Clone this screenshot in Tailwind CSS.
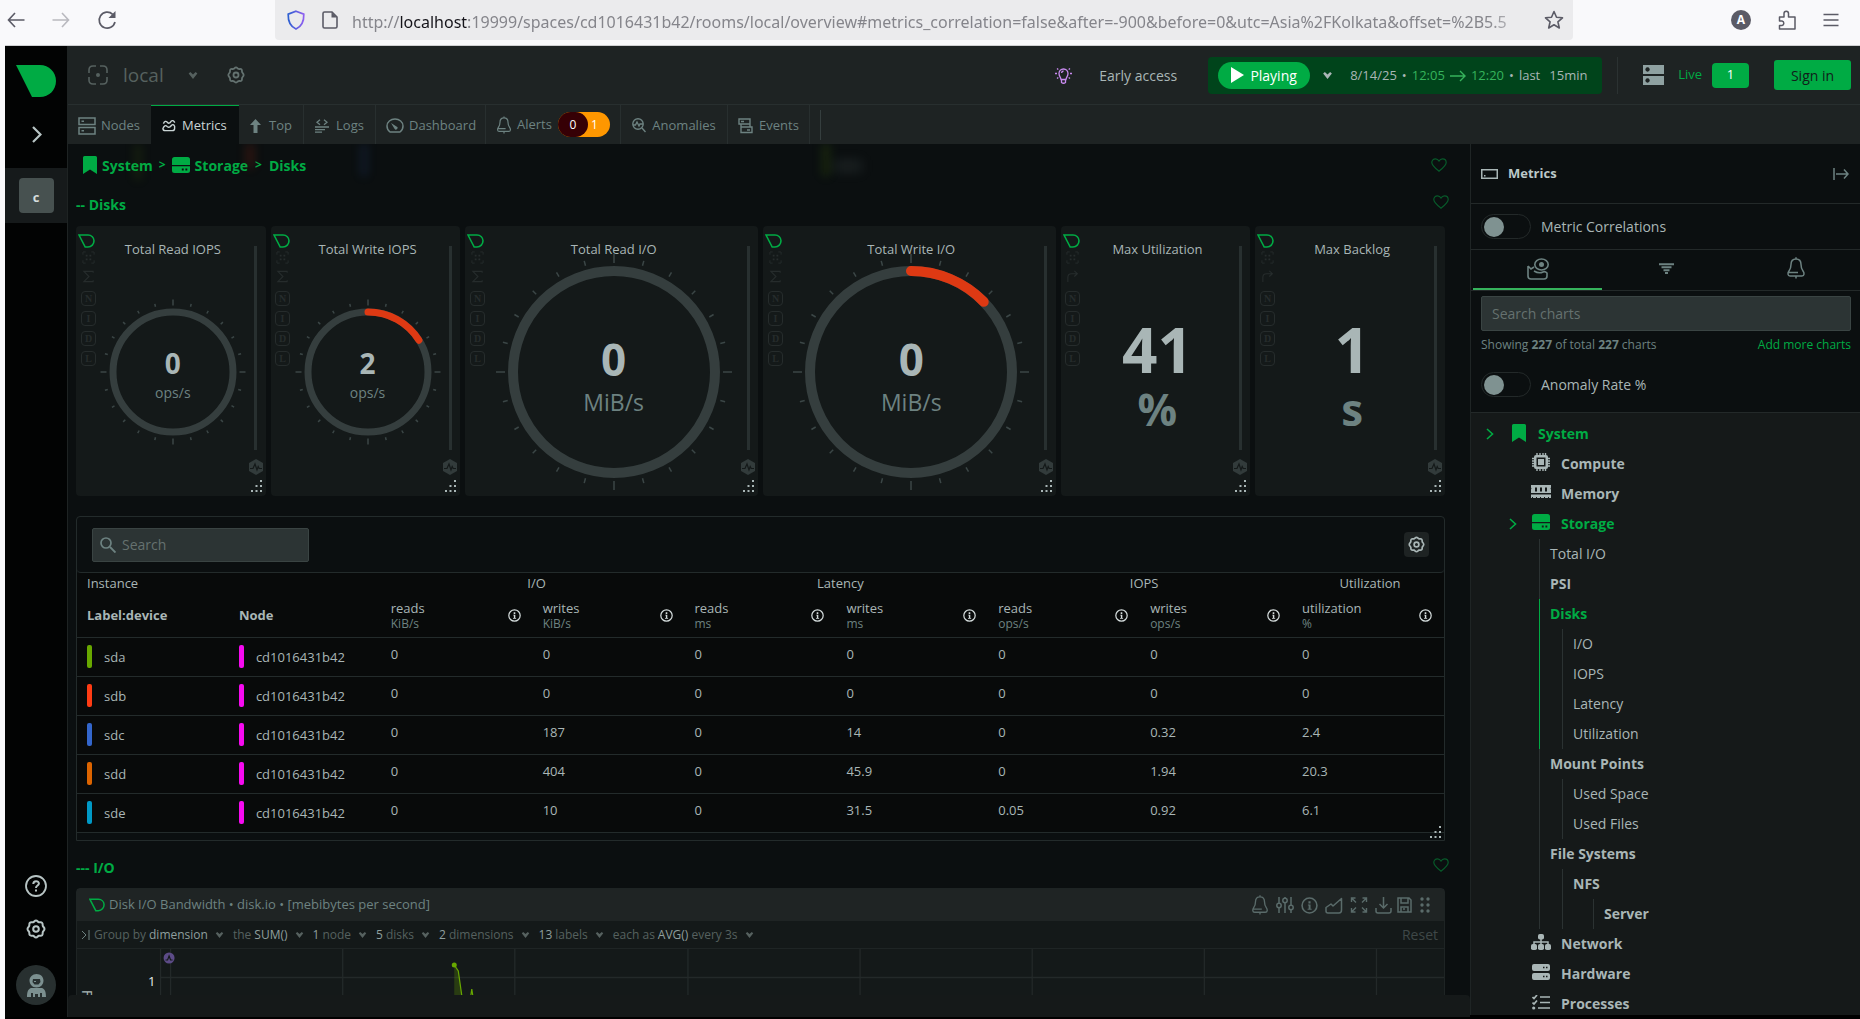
<!DOCTYPE html>
<html lang="en">
<head>
<meta charset="utf-8">
<title>Disks - Netdata</title>
<script src="https://cdn.jsdelivr.net/npm/@tailwindcss/browser@4"></script>
</head>
<body class="h-screen overflow-hidden flex flex-col bg-[#f9f9fb] font-['Open_Sans','Noto_Sans',sans-serif] text-[14px] text-[#a9b6b6]">

<svg class="hidden" aria-hidden="true">
  <symbol id="gear" viewBox="0 0 20 20"><path d="M10 1.6c1.5 0 1.8 1.4 2.9 1.7s2.300-.5 3.200.5.300 2 .7 3.100 1.700 1.500 1.700 3.100-1.300 1.900-1.700 3.100.3 2.100-.7 3.100-2.100.2-3.200.5-1.400 1.700-2.900 1.700-1.800-1.400-2.900-1.700-2.300.5-3.200-.5-.3-2-.7-3.100-1.700-1.500-1.700-3.100 1.300-1.900 1.700-3.100-.3-2.100.7-3.100 2.100-.2 3.200-.5S8.500 1.600 10 1.600z" fill="none" stroke="currentColor" stroke-width="2"/><circle cx="10" cy="10" r="2.800" fill="none" stroke="currentColor" stroke-width="2"/></symbol>
  <symbol id="caret" viewBox="0 0 10 8"><path d="M0 1.600 2 0l3 2.800L8 0l2 1.600L5 8z" fill="currentColor"/></symbol>
  <symbol id="bookmark" viewBox="0 0 14 18"><path d="M1.500 0h11Q14 0 14 1.500V18l-7-4.500L0 18V1.500Q0 0 1.500 0z" fill="currentColor"/></symbol>
  <symbol id="storage" viewBox="0 0 18 16"><path d="M2.500 0h13Q18 0 18 2.500V8H0V2.500Q0 0 2.500 0z" fill="currentColor"/><path fill-rule="evenodd" d="M0 9.200h18v4.300q0 2.500-2.500 2.500h-13Q0 16 0 13.500zM9.800 11.600v1.900h1.900v-1.900zm3.600 0v1.900h1.900v-1.900z" fill="currentColor"/></symbol>
  <symbol id="heart" viewBox="0 0 16 14"><path d="M8 13.200C4.500 10.500.8 7.800.8 4.600.8 2.400 2.400.8 4.500.8 6 .8 7.200 1.600 8 3 8.800 1.600 10 .8 11.500.8c2.100 0 3.700 1.600 3.700 3.800 0 3.200-3.700 5.900-7.200 8.600z" fill="none" stroke="currentColor" stroke-width="1.200"/></symbol>
  <symbol id="drop" viewBox="0 0 17 14"><path d="M1 1h9c3.500 0 6 2.600 6 5.800S13.500 13 10 13H7.200z" fill="none" stroke="#00ab44" stroke-width="1.600"/></symbol>
  <symbol id="focus" viewBox="0 0 14 14"><path d="M1 4V1h3M10 1h3v3M13 10v3h-3M4 13H1v-3" fill="none" stroke="currentColor"/><path d="M4 4h2v2H4zM8 4h2v2H8zM4 8h2v2H4zM8 8h2v2H8z" fill="currentColor"/></symbol>
  <symbol id="sigma" viewBox="0 0 14 14"><path d="M12 3V1.500H2L7.500 7 2 12.500h10V11" fill="none" stroke="currentColor" stroke-width="1.200"/></symbol>
  <symbol id="turn" viewBox="0 0 14 14"><path d="M2 13V8q0-4 4-4h6M9 1l3.200 3L9 7" fill="none" stroke="currentColor" stroke-width="1.200"/></symbol>
  <symbol id="hex" viewBox="0 0 14 16"><path d="M7 0l7 4v8l-7 4-7-4V4z" fill="#323b3b"/><path d="M1 9.500H4L6 5l2 6 1.200-3.500 1 2H13" fill="none" stroke="#141919" stroke-width="1.200"/></symbol>
  <symbol id="grip" viewBox="0 0 12 12"><path d="M10 0h2v2h-2zM5.500 5h2v2h-2zM10 5h2v2h-2zM1 10h2v2H1zM5.500 10h2v2h-2zM10 10h2v2h-2z" fill="#a9b6b6"/></symbol>
  <symbol id="info" viewBox="0 0 16 16"><circle cx="8" cy="8" r="7" fill="none" stroke="currentColor" stroke-width="1.500"/><path d="M7 4h2v2H7zM6.500 7H9v4h1v1H6.200v-1H7.200V8h-.7z" fill="currentColor"/></symbol>
  <symbol id="bell" viewBox="0 0 20 22"><path d="M10 2C6.500 2 5 4.500 5 7.500c0 3-.5 4.500-2 6.500-1.500 2-1.500 5 1 5h12c2.500 0 2.500-3 1-5-1.500-2-2-3.500-2-6.500C15 4.500 13.500 2 10 2zM10 2V.3M10 19v2.500M2.500 15.500H12" fill="none" stroke="currentColor" stroke-width="1.500"/></symbol>
  <symbol id="server" viewBox="0 0 18 18"><path d="M1 1h16v6.500H1zM1 10.500h16V17H1z" fill="none" stroke="currentColor" stroke-width="1.500"/><path d="M3.500 3.500H6v1.500H3.500zM3.500 13H6v1.500H3.500z" fill="currentColor"/></symbol>
  <symbol id="chev" viewBox="0 0 8 12"><path d="M1 1l5.500 5L1 11" fill="none" stroke="currentColor" stroke-width="1.600"/></symbol>
</svg>

<!-- Browser toolbar -->
<div class="h-[45px] shrink-0 flex items-start text-[#5b5b66]">
  <div class="w-[275px] h-10 shrink-0 flex items-center pl-[7px] gap-[27px]">
    <button aria-label="Back"><svg class="w-[18px] h-4" viewBox="0 0 18 16"><path d="M17.500 8H1.500M8 1L1.500 8 8 15" fill="none" stroke="currentColor" stroke-width="1.600"/></svg></button>
    <button aria-label="Forward" class="text-[#b9b9bf]"><svg class="w-[18px] h-4" viewBox="0 0 18 16"><path d="M.5 8h16M10 1l6.500 7L10 15" fill="none" stroke="currentColor" stroke-width="1.600"/></svg></button>
    <button aria-label="Reload"><svg class="w-5 h-5" viewBox="0 0 20 20"><path d="M18 12a8 8 0 1 1-2.300-7.700" fill="none" stroke="currentColor" stroke-width="1.700"/><path d="M18.500 1v7h-7z" fill="currentColor"/></svg></button>
  </div>
  <div class="w-[1298px] h-10 min-w-0 flex items-center bg-[#ebebed] rounded-b-[4px] pl-[11px] pr-[9px]">
    <svg class="w-5 h-5 shrink-0" viewBox="0 0 20 20"><defs><linearGradient id="sh"><stop offset="0" stop-color="#2b5fd0"/><stop offset="1" stop-color="#8f5ff0"/></linearGradient></defs><path d="M10 1.200l7.800 3C18 11 15.500 16.500 10 19 4.500 16.500 2 11 2.200 4.200z" fill="none" stroke="url(#sh)" stroke-width="1.700"/></svg>
    <svg class="w-4 h-[18px] shrink-0 ml-4 mr-[14px]" viewBox="0 0 16 18"><path d="M2.500 1h7.500l5 5v9.500q0 1.500-1.500 1.500h-11Q1 17 1 15.500v-13Q1 1 2.500 1z" fill="none" stroke="currentColor" stroke-width="1.600"/><path d="M9.500 1v5.500H15z" fill="currentColor"/></svg>
    <div role="textbox" aria-label="Address" class="flex-1 min-w-0 overflow-hidden whitespace-nowrap font-['Noto_Sans','Open_Sans',sans-serif] text-[16px] text-[#85858b] pt-1 [mask-image:linear-gradient(to_right,black_96%,transparent)]">http://<span class="text-[#15141a]">localhost</span>:19999/spaces/cd1016431b42/rooms/local/overview#metrics_correlation=false&amp;after=-900&amp;before=0&amp;utc=Asia%2FKolkata&amp;offset=%2B5.5</div>
    <button aria-label="Bookmark" class="ml-[9px]"><svg class="w-5 h-5" viewBox="0 0 20 20"><path d="M10 1.500l2.500 5.700 6 .6-4.600 4 1.400 6.200-5.300-3.300L4.700 18l1.400-6.200-4.600-4 6-.6z" fill="none" stroke="currentColor" stroke-width="1.600" stroke-linejoin="round"/></svg></button>
  </div>
  <div class="ml-auto h-10 flex items-center gap-[27px] pr-[21px]">
    <span class="size-5 rounded-full bg-[#5b5b66] text-white text-[12px] font-bold grid place-items-center leading-none">A</span>
    <svg class="w-[18px] h-5" viewBox="0 0 18 20"><path d="M1.500 7H6V3.500a2 2 0 0 1 4.500 0V7H17v12H1.500v-3.500H4a2.300 2.300 0 0 0 0-4.500H1.500z" fill="none" stroke="currentColor" stroke-width="1.500" stroke-linejoin="round"/></svg>
    <svg class="w-4 h-[14px]" viewBox="0 0 16 14"><path d="M.5 1.500h15M.5 7h15M.5 12.500h15" stroke="currentColor" stroke-width="1.400"/></svg>
  </div>
</div>

<div class="flex-1 min-h-0 flex ml-[5px] bg-black border-t border-[#cfd0d2] pb-[2px]">
  <!-- Space rail -->
  <nav class="w-[63px] shrink-0 bg-[#020303] border-r border-[#1e2323] flex flex-col items-center">
    <a href="#" aria-label="Netdata" class="mt-[19px]"><svg class="w-10 h-8" viewBox="0 0 40 32"><path d="M0 0h24c9 0 16 7 16 16s-7 16-16 16h-8z" fill="#00ab44"/></svg></a>
    <button aria-label="Expand" class="mt-[29px] text-[#b7c4c4]"><svg class="w-3 h-[17px] block" viewBox="0 0 12 17"><path d="M3 1l7.500 7.500L3 16" fill="none" stroke="currentColor" stroke-width="2.200"/></svg></button>
    <div class="mt-[25px] w-full h-[55px] bg-[#161a1b] flex items-center justify-center"><button class="size-[35px] rounded bg-[#475150] text-[#d6dddd] text-[13px] font-bold pt-1">c</button></div>
    <div class="mt-auto flex flex-col items-center pb-[12px] text-[#b7c4c4]">
      <button aria-label="Help" class="mb-[22px]"><svg class="size-[22px] block" viewBox="0 0 22 22"><circle cx="11" cy="11" r="10" fill="none" stroke="currentColor" stroke-width="1.800"/><path d="M8.300 9c0-3.800 5.600-3.600 5.600-.4 0 2-2.900 2-2.900 4.400" fill="none" stroke="currentColor" stroke-width="2"/><path d="M10 14.500h2v2h-2z" fill="currentColor"/></svg></button>
      <button aria-label="Settings" class="mb-[26px]"><svg class="size-5 block"><use href="#gear"/></svg></button>
      <button aria-label="Account" class="size-10 rounded-full bg-[#283030] grid place-items-center text-[#7c9090]"><svg class="w-[19px] h-[23px]" viewBox="0 0 19 23"><path fill="currentColor" fill-rule="evenodd" d="M9.500 0c4 0 7 2.800 7 6.500S14 13.500 9.500 13.500 2.500 10 2.500 6.500 5.500 0 9.500 0zM6 5l-.5 3 2 2.500h4l2-2.500-.5-3z"/><path d="M0 23c0-5 1-8 4-9h11c3 1 4 4 4 9h-4v-4h-2v4H11v-3H8v3H6v-4H4v4z" fill="currentColor"/><path d="M7 7.500h2" stroke="currentColor"/></svg></button>
    </div>
  </nav>

  <div class="flex-1 min-w-0 flex flex-col">
    <!-- Top bar -->
    <header class="h-[58px] shrink-0 bg-[#1e2323] flex items-center pl-5 pr-[9px] text-[#56615f]">
      <svg class="size-5" viewBox="0 0 20 20"><path d="M1 8V5q0-4 4-4h3M12 1h3q4 0 4 4v3M19 12v3q0 4-4 4h-3M8 19H5q-4 0-4-4v-3" fill="none" stroke="currentColor" stroke-width="1.600"/><circle cx="10" cy="10" r="2" fill="currentColor"/></svg>
      <button class="ml-[15px] flex items-center gap-6 text-[19px]">local <svg class="w-[10px] h-[7px]"><use href="#caret"/></svg></button>
      <button aria-label="Room settings" class="ml-[29px] text-[#647270]"><svg class="size-[18px]"><use href="#gear"/></svg></button>
      <div class="ml-auto flex items-center">
        <svg class="w-[17px] h-[17px] mr-[27px] text-[#c98bf0]" viewBox="0 0 17 17"><path d="M6 12.500C6 10.500 4 9.500 4 6.500a4.500 4.500 0 0 1 9 0c0 3-2 4-2 6zM6.500 12.500v3q2 1.500 4 0v-3M0 6.500h2M15 6.500h2M2 1.500l1.300 1M15 1.500l-1.300 1M2 11.500l1.300-1M15 11.500l-1.300-1M6.500 6q.3-1.800 2-2" fill="none" stroke="currentColor" stroke-width="1.300"/></svg>
        <a href="#" class="text-[#a9b6b6] mr-[31px]">Early access</a>
        <div class="h-[37px] w-[394px] rounded bg-[#00441b] flex items-center pl-[10px] text-[#a9b6b6]">
          <button class="h-[27px] w-[92px] rounded-full bg-[#00ab44] text-white flex items-center justify-center gap-[6px]"><svg class="w-[13px] h-[16px]" viewBox="0 0 13 16"><path d="M0 0l13 8L0 16z" fill="#fff"/></svg>Playing</button>
          <svg class="w-[9px] h-[7px] ml-[13px] mr-[18px]"><use href="#caret"/></svg>
          <span class="text-[13px] pt-px flex items-center gap-[5px] whitespace-nowrap"><span>8/14/25</span><span>•</span><span class="text-[#36b35c]">12:05</span><svg class="w-4 h-3 text-[#36b35c]" viewBox="0 0 16 12"><path d="M0 6h15M10 1l5 5-5 5" fill="none" stroke="currentColor" stroke-width="1.400"/></svg><span class="text-[#36b35c]">12:20</span><span>•</span><span>last</span><span class="ml-1">15min</span></span>
        </div>
        <div class="w-px h-[37px] bg-[#2b3232] ml-[15px] mr-[25px]"></div>
        <svg class="w-[21px] h-5 text-[#8fa1a1]" viewBox="0 0 21 20"><path fill-rule="evenodd" d="M0 0h21v9H0zM4.500 2.300a2.200 2.200 0 1 0 .1 0zM0 11h21v9H0zm4.500 2.300a2.200 2.200 0 1 0 .1 0z" fill="currentColor"/></svg>
        <span class="ml-[14px] mr-[10px] text-[#00ab44] text-[13px]">Live</span>
        <button class="w-[37px] h-[25px] rounded bg-[#00ab44] text-white text-[13px]">1</button>
        <button class="ml-[25px] w-[77px] h-[30px] rounded-[3px] bg-[#00ab44] text-[#11201a]">Sign in</button>
      </div>
    </header>

    <!-- Section tabs -->
    <nav class="h-10 shrink-0 bg-[#1e2323] border-t border-[#282f2f] flex items-stretch text-[#6d8281] text-[13px]">
      <a href="#" class="w-[83px] pt-[2px] flex items-center pl-[10px] gap-[5px]"><svg class="size-[18px]"><use href="#server"/></svg>Nodes</a>
      <a href="#" class="w-[88px] pt-px flex items-center pl-[11px] gap-[6px] bg-[#0b0f10] border-t border-t-[#00ab44] text-[#cad5d5]"><svg class="w-[14px] h-[13px]" viewBox="0 0 15 13"><path d="M1.500 4.500q2-4 4.200-1.500 2 2.500 4-1 2-2 4 1.500" fill="none" stroke="currentColor" stroke-width="1.500"/><path d="M13.500 7v3q0 2-2.500 2H3.500Q1 12 1 9.700 3 5 5.500 7.500q2.500 2 4.500-1 2-2 3.500.5" fill="none" stroke="currentColor" stroke-width="1.500"/></svg>Metrics</a>
      <a href="#" class="w-[65px] pt-[2px] flex items-center justify-center gap-2 border-r border-[#282f2f]"><svg class="w-[11px] h-[14px]" viewBox="0 0 11 14"><path d="M5.500 0L11 6H7.500v8h-4V6H0z" fill="currentColor"/></svg>Top</a>
      <a href="#" class="w-[72px] pt-[2px] flex items-center justify-center gap-[7px] border-r border-[#282f2f]"><svg class="w-[14px] h-[14px]" viewBox="0 0 14 14"><path d="M5 .8L2 3.300 5 5.800M9 .8l3 2.500-3 2.500M0 8h14M0 10.600h10M0 13.200h7" fill="none" stroke="currentColor" stroke-width="1.300"/></svg>Logs</a>
      <a href="#" class="w-[110px] pt-[2px] flex items-center pl-[10px] gap-[5px] border-r border-[#282f2f]"><svg class="w-[18px] h-[15px]" viewBox="0 0 18 15"><path d="M4 14Q1 12 1 8a8 7 0 0 1 16 0q0 4-3 6z" fill="none" stroke="currentColor" stroke-width="1.500"/><path d="M5 5l5.500 3.500a1.600 1.600 0 1 1-2 2.300z" fill="currentColor"/></svg>Dashboard</a>
      <a href="#" class="w-[135px] flex items-center pl-[10px] gap-[5px] border-r border-[#282f2f]"><svg class="w-4 h-[18px]"><use href="#bell"/></svg>Alerts<span class="ml-px w-[52px] h-[25px] rounded-full bg-[#ff9700] flex items-center text-white text-[12px]"><span class="w-[30px] h-full rounded-full bg-[#360005] grid place-items-center">0</span><span class="pl-[3px]">1</span></span></a>
      <a href="#" class="w-[107px] pt-[2px] flex items-center justify-center gap-[6px] border-r border-[#282f2f]"><svg class="w-[14px] h-[15px]" viewBox="0 0 14 15"><circle cx="6" cy="6" r="5.200" fill="none" stroke="currentColor" stroke-width="1.400"/><path d="M1 7h2.500L5 4l2 4 1-2h3M10 10l3.500 4" fill="none" stroke="currentColor" stroke-width="1.400"/></svg>Anomalies</a>
      <a href="#" class="w-[82px] pt-[2px] flex items-center justify-center gap-[6px] border-r border-[#282f2f]"><svg class="w-[15px] h-4" viewBox="0 0 15 16"><path d="M1 1h11v5H1zM3 9h11v5.500H3zM3 6v3M12 6v3M3 3.500h3M9 12h3" fill="none" stroke="currentColor" stroke-width="1.400"/></svg>Events</a>
      <div class="w-px h-[30px] my-auto ml-[10px] bg-[#353e3e]"></div>
    </nav>

    <div class="flex-1 min-h-0 flex">
      <main class="flex-1 min-w-0 bg-[#0b0f10] flex flex-col">
        <div class="flex-1 min-h-0 overflow-hidden pl-2 pr-[25px]">
          <div class="relative flex items-center h-[42px] pl-[7px] text-[#00ab44] font-bold gap-[5px]">
            <!-- rows scrolled beneath the frosted breadcrumb bar -->
            <span class="absolute left-[58px] top-0 w-2 h-9 bg-[#68a800]/10 blur-[5px]"></span>
            <span class="absolute left-[170px] top-0 w-2 h-6 bg-[#ff3c14]/15 blur-[5px]"></span>
            <span class="absolute left-[284px] top-0 w-2 h-8 bg-[#3366cc]/12 blur-[5px]"></span>
            <span class="absolute left-[746px] top-0 w-2 h-8 bg-[#68a800]/15 blur-[5px]"></span>
            <span class="absolute left-[758px] top-4 w-7 h-3 bg-[#a9b6b6]/10 blur-[6px]"></span>
            <svg class="w-[14px] h-[18px]"><use href="#bookmark"/></svg><a href="#">System</a><span class="px-px text-[12px]">&gt;</span>
            <svg class="w-[18px] h-4"><use href="#storage"/></svg><a href="#">Storage</a><span class="px-[2px] text-[12px]">&gt;</span><a href="#">Disks</a>
            <button aria-label="Favourite" class="ml-auto -mr-[2px] text-[#085a2a]"><svg class="w-4 h-[14px]"><use href="#heart"/></svg></button>
          </div>
          <div class="flex items-center h-[36px] text-[#00ab44] font-bold"><h2>-- Disks</h2><button aria-label="Favourite" class="ml-auto -mr-1 mb-1 text-[#085a2a]"><svg class="w-4 h-[14px]"><use href="#heart"/></svg></button></div>

          <div id="cards" class="mt-1 grid grid-cols-[190fr_190fr_293fr_293fr_190fr_190fr] gap-[5px]"></div>

          <!-- Instances table -->
          <section class="relative mt-5 h-[325px] border border-[#232b2b] rounded-t">
            <div class="h-[56px] flex items-center pl-[15px] pr-[15px] rounded-b border-b border-[#232b2b]">
              <label class="w-[217px] h-[34px] rounded-[2px] bg-[#2c3434] border border-[#3a4443] flex items-center pl-[7px] gap-[6px] text-[#6d8281]">
                <svg class="size-4 shrink-0" viewBox="0 0 16 16"><circle cx="6" cy="6" r="5" fill="none" stroke="currentColor" stroke-width="1.700"/><path d="M10 10l5.500 5.500" stroke="currentColor" stroke-width="1.900"/></svg>
                <input aria-label="Search instances" class="w-full bg-transparent outline-none placeholder:text-[#65716f]" placeholder="Search"></label>
              <button aria-label="Table settings" class="ml-auto size-[25px] rounded bg-[#1e2323] grid place-items-center"><svg class="size-[17px]"><use href="#gear"/></svg></button>
            </div>
            <table class="w-full table-fixed border-collapse bg-[#080a0a] text-[13px] text-left">
              <thead class="border-b border-[#232b2b]">
                <tr class="h-[22px]"><th colspan="2" class="pl-[10px] font-normal">Instance</th><th colspan="2" class="pl-[8px] font-normal text-center">I/O</th><th colspan="2" class="pl-[8px] font-normal text-center">Latency</th><th colspan="2" class="pl-[8px] font-normal text-center">IOPS</th><th class="pl-[4px] font-normal text-center">Utilization</th></tr>
                <tr id="cols" class="h-[42px]"><th class="pl-[10px]">Label:device</th><th class="pl-[10px]">Node</th></tr>
              </thead>
              <tbody id="rows"></tbody>
            </table>
            <svg class="absolute right-[3px] bottom-[2px] size-3"><use href="#grip"/></svg>
          </section>

          <div class="flex items-center h-[47px] pt-[5px] text-[#00ab44] font-bold"><h3>--- I/O</h3><button aria-label="Favourite" class="ml-auto -mr-1 mb-1 text-[#085a2a]"><svg class="w-4 h-[14px]"><use href="#heart"/></svg></button></div>

          <!-- Bandwidth chart -->
          <section class="bg-[#141919] border border-[#1e2424] rounded-t">
            <div class="h-8 bg-[#1f2424] flex items-center pl-[12px] pr-[13px] text-[#6d8281] text-[13px]">
              <svg class="w-4 h-[14px] mr-1"><use href="#drop"/></svg>Disk I/O Bandwidth • disk.io • [mebibytes per second]
              <div class="ml-auto flex items-center gap-[7px] text-[#5a6b6a]">
                <button aria-label="Alerts"><svg class="w-[18px] h-5 block"><use href="#bell"/></svg></button>
                <button aria-label="Options"><svg class="w-[18px] h-[18px] block" viewBox="0 0 18 18"><path d="M3 1v6M3 12v5M9 1v1M9 7v10M15 1v8M15 14v3" stroke="currentColor" stroke-width="1.500"/><g fill="none" stroke="currentColor" stroke-width="1.500"><circle cx="3" cy="9.500" r="2.200"/><circle cx="9" cy="4.500" r="2.200"/><circle cx="15" cy="11.500" r="2.200"/></g></svg></button>
                <button aria-label="Info"><svg class="w-[17px] h-[17px] block"><use href="#info"/></svg></button>
                <button aria-label="Chart type"><svg class="w-[18px] h-[17px] block" viewBox="0 0 18 17"><path d="M1 14v-3.500L6 7l2 2 8.500-7.500V13q0 3-2.500 3H3q-2 0-2-2z" fill="none" stroke="currentColor" stroke-width="1.500" stroke-linejoin="round"/></svg></button>
                <button aria-label="Fullscreen"><svg class="w-[18px] h-[16px] block" viewBox="0 0 18 16"><path d="M1.500 5V1h4M1.500 1L6 5.500M12.500 1h4v4M16.500 1L12 5.500M1.500 11v4h4M1.500 15L6 10.500M12.500 15h4v-4M16.500 15L12 10.500" fill="none" stroke="currentColor" stroke-width="1.400"/></svg></button>
                <button aria-label="Download"><svg class="w-[17px] h-[17px] block" viewBox="0 0 17 17"><path d="M1 11v3q0 2 2 2h11q2 0 2-2v-3M8.500 0v11M4.500 7l4 4 4-4" fill="none" stroke="currentColor" stroke-width="1.500"/></svg></button>
                <button aria-label="Save" class="-ml-[2px]"><svg class="w-[15px] h-[16px] block" viewBox="0 0 15 16"><path d="M1 1h11l2 2v12H1zM4 1v5h7V1M4 15v-5h7v5M7 11v2" fill="none" stroke="currentColor" stroke-width="1.500"/></svg></button>
                <button aria-label="Move"><svg class="w-[12px] h-[16px] block" viewBox="0 0 12 16"><g fill="currentColor"><circle cx="3" cy="2" r="1.700"/><circle cx="9" cy="2" r="1.700"/><circle cx="3" cy="8" r="1.700"/><circle cx="9" cy="8" r="1.700"/><circle cx="3" cy="14" r="1.700"/><circle cx="9" cy="14" r="1.700"/></g></svg></button>
              </div>
            </div>
            <div class="h-[28px] flex items-center pl-1 pr-[6px] text-[12px] text-[#56615f] whitespace-nowrap border-b border-[#1f2525]">
              <svg class="w-[9px] h-[10px] mr-1" viewBox="0 0 9 10"><path d="M1 1l4 4-4 4M8 0v10" fill="none" stroke="#6d8281"/></svg>
              <button class="flex items-center gap-[3px] mr-[9px]">Group by <span class="text-[#8f9f9e]">dimension</span><svg class="w-[9px] h-[6px] ml-[4px]"><use href="#caret"/></svg></button>
              <button class="flex items-center gap-[3px] mr-[9px]">the <span class="text-[#8f9f9e]">SUM()</span><svg class="w-[9px] h-[6px] ml-[4px]"><use href="#caret"/></svg></button>
              <button class="flex items-center gap-[3px] mr-[9px]"><span class="text-[#8f9f9e]">1</span> node<svg class="w-[9px] h-[6px] ml-[4px]"><use href="#caret"/></svg></button>
              <button class="flex items-center gap-[3px] mr-[9px]"><span class="text-[#8f9f9e]">5</span> disks<svg class="w-[9px] h-[6px] ml-[4px]"><use href="#caret"/></svg></button>
              <button class="flex items-center gap-[3px] mr-[9px]"><span class="text-[#8f9f9e]">2</span> dimensions<svg class="w-[9px] h-[6px] ml-[4px]"><use href="#caret"/></svg></button>
              <button class="flex items-center gap-[3px] mr-[9px]"><span class="text-[#8f9f9e]">13</span> labels<svg class="w-[9px] h-[6px] ml-[4px]"><use href="#caret"/></svg></button>
              <button class="flex items-center gap-[3px]">each as <span class="text-[#8f9f9e]">AVG()</span> every 3s<svg class="w-[9px] h-[6px] ml-[4px]"><use href="#caret"/></svg></button>
              <button class="ml-auto text-[14px] text-[#3f4848]">Reset</button>
            </div>
            <svg class="block w-full h-[160px]" viewBox="0 0 1366 160" preserveAspectRatio="xMinYMin slice">
              <path d="M83.500 0v160M93.500 0v160M265.500 0v160M437.500 0v160M610.500 0v160M782.500 0v160M954.500 0v160M1126.500 0v160M1298.500 0v160M83 28.500h1283" stroke="#232929" stroke-width="1.300"/>
              <circle cx="92" cy="9" r="5.500" fill="#5c4b87"/><path d="M88.500 11h2l1.500-4 1.500 4h2" fill="none" stroke="#141919" stroke-width="1.200"/>
              <path d="M377 16l4 6 4 26V60h-8z" fill="#68a800" fill-opacity=".25"/><path d="M377 16l4 6 4 28M393 50l1.500-10 1.500 10" fill="none" stroke="#68a800" stroke-width="1.200"/><circle cx="377" cy="16" r="2.500" fill="#68a800"/>
              <text x="71" y="37" font-size="13" fill="#e4eaea">1</text>
              <text transform="translate(5 41) rotate(90)" font-size="14" fill="#a9b6b6">F</text>
            </svg>
          </section>
        </div>
        <div class="h-[22px] shrink-0 bg-[#151919] rounded-t"></div>
      </main>

      <!-- Metrics panel -->
      <aside class="w-[390px] shrink-0 bg-[#0b0f10] border-l border-[#1f2525] overflow-hidden flex flex-col mb-[2px]">
        <div class="h-[60px] shrink-0 flex items-center pl-[10px] pr-[11px] border-b border-[#232929]">
          <svg class="w-[17px] h-[10px] mr-[10px]" viewBox="0 0 17 10"><rect x=".75" y=".75" width="15.500" height="8.500" fill="none" stroke="currentColor" stroke-width="1.500"/><path d="M3 6h1.500v1.500H3z" fill="currentColor"/></svg>
          <h2 class="font-bold text-[13px] text-[#bcc8c8]">Metrics</h2>
          <button aria-label="Collapse" class="ml-auto text-[#6d8281]"><svg class="w-4 h-3 block" viewBox="0 0 16 12"><path d="M1 0v12M3 6h12M11 1.500L15 6l-4 4.500" fill="none" stroke="currentColor" stroke-width="1.500"/></svg></button>
        </div>
        <div class="h-[46px] shrink-0 flex items-center pl-[10px] border-b border-[#232929]">
          <input id="mc" type="checkbox" class="appearance-none w-[50px] h-[25px] rounded-full border border-[#232929] flex items-center pl-[2px] before:block before:size-5 before:rounded-full before:bg-[#7f9291]"><label for="mc" class="ml-[10px]">Metric Correlations</label>
        </div>
        <div class="h-[41px] shrink-0 grid grid-cols-3 pl-[2px] border-b border-[#232929] text-[#6d8281]">
          <button aria-label="Charts" class="grid place-items-center border-b-2 border-[#36b35c]"><svg class="w-[22px] h-[22px]" viewBox="0 0 22 22"><path d="M1 8l3 3 3-2M1 8v10q0 3 3 3h13q3 0 3-3v-3q-2-2-4-1-4 2-9-1" fill="none" stroke="currentColor" stroke-width="1.600"/><ellipse cx="14.500" cy="6.500" rx="6.700" ry="5.500" fill="none" stroke="currentColor" stroke-width="1.600"/><circle cx="14.500" cy="6.500" r="2.500" fill="currentColor"/></svg></button>
          <button aria-label="Filters" class="grid place-items-center pb-1"><svg class="w-[15px] h-[11px]" viewBox="0 0 15 11"><path d="M0 1.200h15M2.500 4.200h10M4.500 7.200h6M6 10h3" stroke="currentColor" stroke-width="1.900"/></svg></button>
          <button aria-label="Alerts" class="grid place-items-center pb-1"><svg class="w-5 h-[22px]"><use href="#bell"/></svg></button>
        </div>
        <div class="shrink-0 h-[122px] pt-[5px] pl-[10px] pr-[9px] border-b border-[#232929]">
          <input aria-label="Search charts" placeholder="Search charts" class="block w-full h-[35px] rounded-[2px] bg-[#2c3434] border border-[#3a4443] px-[10px] placeholder:text-[#65716f]">
          <div class="flex justify-between text-[12px] leading-[28px] text-[#6d8281]"><span>Showing <b>227</b> of total <b>227</b> charts</span><a href="#" class="text-[#00ab44]">Add more charts</a></div>
          <div class="flex items-center mt-[13px]"><input id="ar" type="checkbox" class="appearance-none w-[50px] h-[25px] rounded-full border border-[#232929] flex items-center pl-[2px] before:block before:size-5 before:rounded-full before:bg-[#7f9291]"><label for="ar" class="ml-[10px]">Anomaly Rate %</label></div>
        </div>
        <nav class="flex-1 min-h-0 overflow-hidden bg-[#151919] pt-[6px] leading-[30px]">
          <a href="#" class="flex items-center h-[30px] pl-[15px] text-[#00ab44] font-bold"><svg class="w-2 h-3"><use href="#chev"/></svg><svg class="w-[14px] h-[18px] ml-[18px] mr-[12px] mb-[2px]"><use href="#bookmark"/></svg>System</a>
          <a href="#" class="flex items-center h-[30px] pl-[60px] gap-[10px] font-bold"><svg class="w-5 h-[18px] mb-1" viewBox="0 0 20 18"><path fill-rule="evenodd" d="M5 2h10q2 0 2 2v10q0 2-2 2H5q-2 0-2-2V4q0-2 2-2zm.5 2.500v9h9v-9z" fill="currentColor"/><path d="M7 6h6v6H7z" fill="currentColor"/><path d="M6 0v2M6 16v2M9 0v2M9 16v2M12 0v2M12 16v2M14.500 0v2M14.500 16v2M1 5.500h3M1 8h3M1 10.500h3M1 13h3M16 5.500h3M16 8h3M16 10.500h3M16 13h3" stroke="currentColor" stroke-width="1.400"/></svg>Compute</a>
          <a href="#" class="flex items-center h-[30px] pl-[60px] gap-[10px] font-bold"><svg class="w-5 h-[14px] mb-1" viewBox="0 0 20 14"><path fill-rule="evenodd" d="M0 0h20v2.500q-1 1 0 2V8H0V4.500q1-1 0-2zM4 2.500v4h2v-4zm5 0v4h2v-4zm5 0v4h2v-4zM0 9.500h20V13h-2v-1h-1v1h-3v-1h-1v1h-3v-1H9v1H6v-1H5v1H2v-1H1v1H0z" fill="currentColor"/></svg>Memory</a>
          <a href="#" class="flex items-center h-[30px] pl-[38px] text-[#00ab44] font-bold"><svg class="w-2 h-3"><use href="#chev"/></svg><svg class="w-[18px] h-4 ml-[15px] mr-[11px] mb-1"><use href="#storage"/></svg>Storage</a>
          <div class="ml-[68px]">
            <div class="border-l border-[#2b3232] pl-[10px]"><a href="#" class="block">Total I/O</a><a href="#" class="block font-bold">PSI</a></div>
            <div class="border-l border-[#00ab44] pl-[10px]"><a href="#" class="block text-[#00ab44] font-bold">Disks</a>
              <div class="ml-3 border-l border-[#2b3232] pl-[10px]"><a href="#" class="block">I/O</a><a href="#" class="block">IOPS</a><a href="#" class="block">Latency</a><a href="#" class="block">Utilization</a></div></div>
            <div class="border-l border-[#2b3232] pl-[10px]"><a href="#" class="block font-bold">Mount Points</a>
              <div class="ml-3 border-l border-[#2b3232] pl-[10px]"><a href="#" class="block">Used Space</a><a href="#" class="block">Used Files</a></div>
              <a href="#" class="block font-bold">File Systems</a>
              <div class="ml-3 border-l border-[#2b3232] pl-[10px]"><a href="#" class="block font-bold">NFS</a><div class="ml-5 border-l border-[#2b3232] pl-[10px]"><a href="#" class="block font-bold">Server</a></div></div></div>
          </div>
          <a href="#" class="flex items-center h-[30px] pl-[60px] gap-[10px] font-bold"><svg class="w-5 h-4 mb-1" viewBox="0 0 20 16"><path d="M10 4v8M3 12V8h14v4" fill="none" stroke="currentColor" stroke-width="1.500"/><g fill="currentColor"><rect x="7" y="0" width="6" height="5.500" rx="1.800"/><rect x="0" y="10" width="6" height="6" rx="1.800"/><rect x="7" y="10" width="6" height="6" rx="1.800"/><rect x="14" y="10" width="6" height="6" rx="1.800"/></g></svg>Network</a>
          <a href="#" class="flex items-center h-[30px] pl-[61px] gap-[11px] font-bold"><svg class="w-[18px] h-4 mb-1" viewBox="0 0 18 16"><path fill-rule="evenodd" d="M2 0h14q2 0 2 2v3q0 2-2 2H2Q0 7 0 5V2q0-2 2-2zm9 2.700v1.600h1.500V2.700zm3 0v1.600h1.500V2.700zM2 9h14q2 0 2 2v3q0 2-2 2H2q-2 0-2-2v-3q0-2 2-2zm9 2.700v1.600h1.500v-1.600zm3 0v1.600h1.500v-1.600z" fill="currentColor"/></svg>Hardware</a>
          <a href="#" class="flex items-center h-[30px] pl-[61px] gap-[11px] font-bold"><svg class="w-[18px] h-[15px] mb-1" viewBox="0 0 18 15"><path d="M8 2h10M8 7.500h10M6 13h12M.5 2l1.500 1.500L5 0M.5 7.500L2 9l3-3.500" fill="none" stroke="currentColor" stroke-width="1.700"/><circle cx="1.700" cy="13" r="1.600" fill="currentColor"/></svg>Processes</a>
        </nav>
      </aside>
    </div>
  </div>
</div>

<script>
  const cards = [
    { title: 'Total Read IOPS', value: '0', unit: 'ops/s', r: 60, arc: 0 },
    { title: 'Total Write IOPS', value: '2', unit: 'ops/s', r: 60, arc: 58 },
    { title: 'Total Read I/O', value: '0', unit: 'MiB/s', r: 101, arc: 0 },
    { title: 'Total Write I/O', value: '0', unit: 'MiB/s', r: 101, arc: 46 },
    { title: 'Max Utilization', value: '41', unit: '%' },
    { title: 'Max Backlog', value: '1', unit: 's' }
  ];

  function gauge(r, arc) {
    const big = r > 80, w = big ? 10 : 7, c = big ? 118 : 73, s = 2 * c;
    const at = (deg, d) => {
      const a = deg * Math.PI / 180;
      return (c + d * Math.sin(a)).toFixed(1) + ' ' + (c - d * Math.cos(a)).toFixed(1);
    };
    let ticks = '';
    for (let i = 0; i < 24; i++) {
      const major = i % 6 === 0;
      ticks += 'M' + at(i * 15, r + w / 2 + (major ? 3 : 4)) + 'L' + at(i * 15, r + w / 2 + (big ? (major ? 12 : 9) : (major ? 9 : 7)));
    }
    return `<svg class="col-start-1 row-start-1 place-self-center mt-[22px]" width="${s}" height="${s}">
      <path d="${ticks}" stroke="#3b4646" stroke-width="1.500"/>
      <circle cx="${c}" cy="${c}" r="${r}" fill="none" stroke="#353e3e" stroke-width="${w}"/>
      ${arc ? `<path d="M${at(0, r)}A${r} ${r} 0 0 1 ${at(arc, r)}" fill="none" stroke="#de3913" stroke-width="${w}" stroke-linecap="round"/>` : ''}</svg>`;
  }

  const box = l => `<svg class="size-[15px] mb-[5px]" viewBox="0 0 15 15"><rect x=".5" y=".5" width="14" height="14" rx="3.500" fill="none" stroke="currentColor"/><text x="7.500" y="11.200" font-size="10" font-family="Liberation Serif" font-weight="bold" text-anchor="middle" fill="currentColor">${l}</text></svg>`;

  document.getElementById('cards').innerHTML = cards.map(c => {
    const text = !c.r
      ? `<div class="col-start-1 row-start-1 place-self-center mt-[36px] text-center font-bold"><div class="text-[62px] leading-[60px] text-[#a9b6b6]">${c.value}</div><div class="text-[44px] leading-[60px] text-[#6d8281]">${c.unit}</div></div>`
      : c.r > 80
      ? `<div class="col-start-1 row-start-1 place-self-center mt-[40px] text-center"><div class="text-[44px] leading-[43px] font-bold text-[#a9b6b6]">${c.value}</div><div class="text-[23px] leading-[43px] text-[#6d8281]">${c.unit}</div></div>`
      : `<div class="col-start-1 row-start-1 place-self-center mt-[33px] text-center"><div class="text-[28px] leading-[30px] font-bold text-[#a9b6b6]">${c.value}</div><div class="text-[14px] leading-[30px] text-[#6d8281]">${c.unit}</div></div>`;
    return `<article class="h-[270px] rounded bg-[#141919] flex overflow-hidden">
      <div class="w-6 shrink-0 flex flex-col items-center text-[#262c2c] pt-2">
        <svg class="w-[17px] h-[14px] self-start ml-[2px] mb-[3px]"><use href="#drop"/></svg>
        <svg class="size-[13px] mb-[6px]"><use href="#focus"/></svg>
        <svg class="size-[13px] mb-2"><use href="${c.r ? '#sigma' : '#turn'}"/></svg>
        ${box('N')}${box('I')}${box('D')}${box('L')}
      </div>
      <div class="flex-1 min-w-0 grid grid-cols-1 grid-rows-1">
        <h4 class="col-start-1 row-start-1 justify-self-center self-start mt-[13px] leading-5 text-[13px]">${c.title}</h4>
        ${c.r ? gauge(c.r, c.arc) : ''}${text}
      </div>
      <div class="w-5 shrink-0 flex flex-col items-center pt-5">
        <div class="w-[3px] h-[204px] bg-[#283030]"></div>
        <svg class="w-[14px] h-4 mt-[9px]"><use href="#hex"/></svg>
        <svg class="size-3 mt-[5px]"><use href="#grip"/></svg>
      </div></article>`;
  }).join('');

  const cols = [['reads', 'KiB/s'], ['writes', 'KiB/s'], ['reads', 'ms'], ['writes', 'ms'], ['reads', 'ops/s'], ['writes', 'ops/s'], ['utilization', '%']];
  document.getElementById('cols').insertAdjacentHTML('beforeend', cols.map(c =>
    `<th class="pl-[10px] pr-3 font-normal align-middle"><div class="flex items-center justify-between"><div class="text-[13px] leading-4">${c[0]}<div class="text-[12px] text-[#6d8281]">${c[1]}</div></div><svg class="size-[13px] text-[#d5dddd]"><use href="#info"/></svg></div></th>`).join(''));

  const rows = [
    ['sda', '#68a800', 0, 0, 0, 0, 0, 0, 0],
    ['sdb', '#ff3c14', 0, 0, 0, 0, 0, 0, 0],
    ['sdc', '#3366cc', 0, 187, 0, 14, 0, 0.32, 2.4],
    ['sdd', '#dc6400', 0, 404, 0, 45.9, 0, 1.94, 20.3],
    ['sde', '#0099c6', 0, 10, 0, 31.5, 0.05, 0.92, 6.1]
  ];
  const tag = (colour, name) => `<td class="pl-[10px]"><div class="flex items-center gap-3"><span class="w-[5px] h-[23px] rounded-[2px]" style="background:${colour}"></span><span class="pt-[2px]">${name}</span></div></td>`;
  document.getElementById('rows').innerHTML = rows.map(([name, colour, ...v]) =>
    `<tr class="h-[39px] border-b border-[#232b2b]">${tag(colour, name)}${tag('#f60af0', 'cd1016431b42')}${v.map(n => `<td class="pl-[10px] pb-1">${n}</td>`).join('')}</tr>`).join('');
</script>
</body>
</html>
